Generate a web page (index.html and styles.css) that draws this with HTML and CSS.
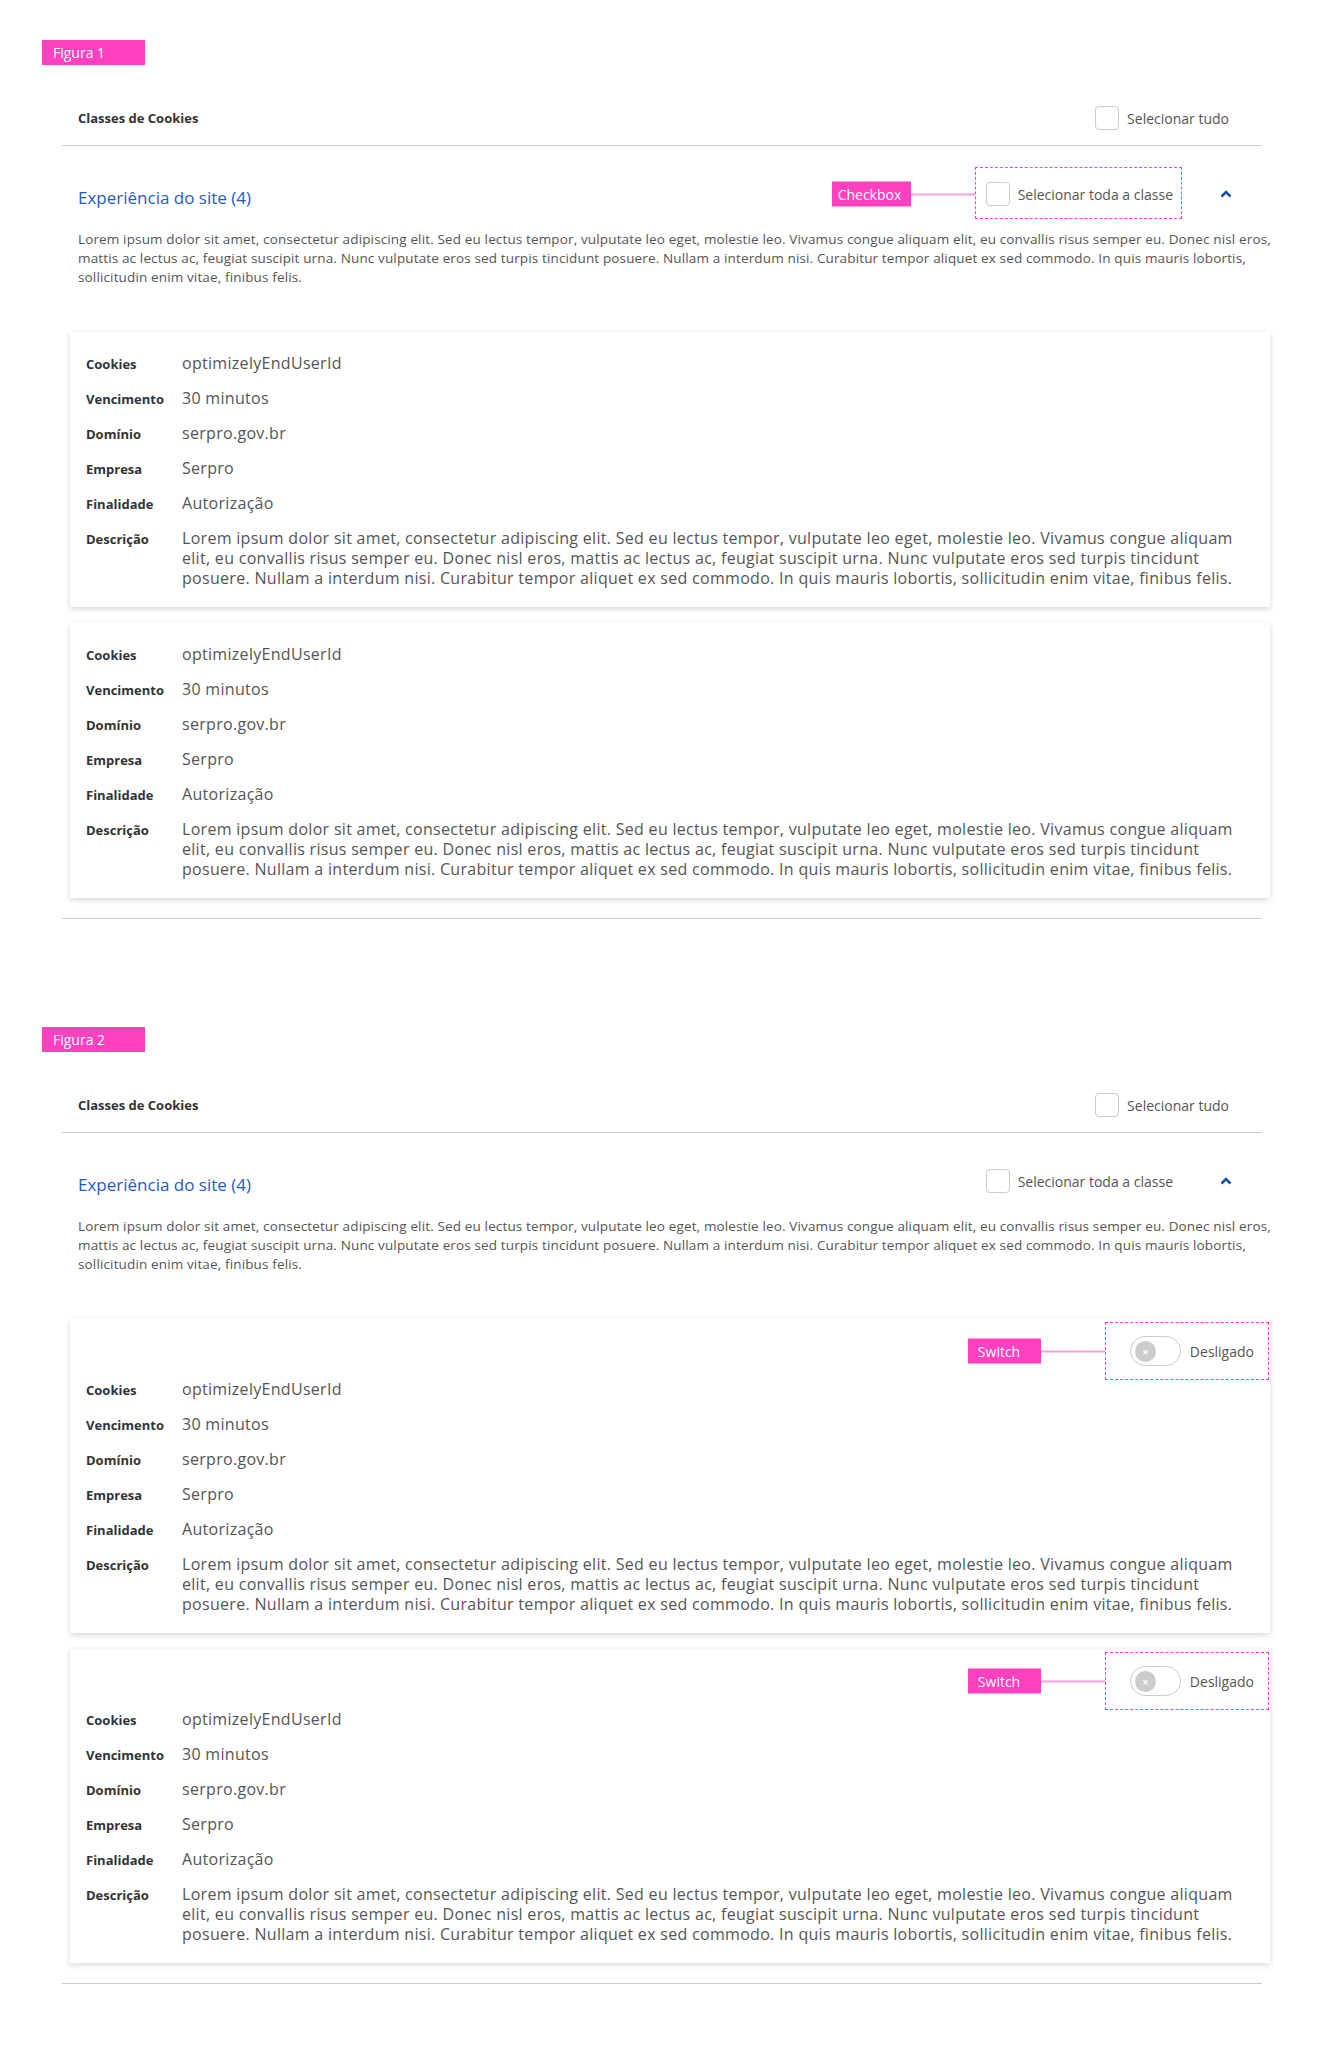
FILE: index.html
```html
<!DOCTYPE html>
<html lang="pt-BR">
<head>
<meta charset="utf-8">
<title>Classes de Cookies</title>
<link rel="stylesheet" href="styles.css">
</head>
<body>

<section class="figure">
  <div class="fig-tag">Figura 1</div>
  <div class="panel">
    <div class="panel-head">
      <span class="panel-title">Classes de Cookies</span>
      <label class="check"><span class="box"></span><span>Selecionar tudo</span></label>
    </div>
    <div class="class-item">
      <div class="class-head">
        <h2 class="class-title">Experiência do site (4)</h2>
        <div class="class-actions">
          <label class="check annotated annotated-check">
            <span class="box"></span><span>Selecionar toda a classe</span>
            <span class="note note-check">Checkbox</span>
          </label>
          <svg class="chevron" width="12" height="8" viewBox="0 0 12 8"><polyline points="1.5,6.5 6,2 10.5,6.5" fill="none" stroke="#1351b4" stroke-width="2.6"/></svg>
        </div>
      </div>
      <p class="class-desc">Lorem ipsum dolor sit amet, consectetur adipiscing elit. Sed eu lectus tempor, vulputate leo eget, molestie leo. Vivamus congue aliquam elit, eu convallis risus semper eu. Donec nisl eros, mattis ac lectus ac, feugiat suscipit urna. Nunc vulputate eros sed turpis tincidunt posuere. Nullam a interdum nisi. Curabitur tempor aliquet ex sed commodo. In quis mauris lobortis, sollicitudin enim vitae, finibus felis.</p>
      <div class="cards">
        <article class="card">
          <dl class="card-grid">
            <dt>Cookies</dt><dd>optimizelyEndUserId</dd>
            <dt>Vencimento</dt><dd>30 minutos</dd>
            <dt>Domínio</dt><dd>serpro.gov.br</dd>
            <dt>Empresa</dt><dd>Serpro</dd>
            <dt>Finalidade</dt><dd>Autorização</dd>
            <dt>Descrição</dt><dd>Lorem ipsum dolor sit amet, consectetur adipiscing elit. Sed eu lectus tempor, vulputate leo eget, molestie leo. Vivamus congue aliquam elit, eu convallis risus semper eu. Donec nisl eros, mattis ac lectus ac, feugiat suscipit urna. Nunc vulputate eros sed turpis tincidunt posuere. Nullam a interdum nisi. Curabitur tempor aliquet ex sed commodo. In quis mauris lobortis, sollicitudin enim vitae, finibus felis.</dd>
          </dl>
        </article>
        <article class="card">
          <dl class="card-grid">
            <dt>Cookies</dt><dd>optimizelyEndUserId</dd>
            <dt>Vencimento</dt><dd>30 minutos</dd>
            <dt>Domínio</dt><dd>serpro.gov.br</dd>
            <dt>Empresa</dt><dd>Serpro</dd>
            <dt>Finalidade</dt><dd>Autorização</dd>
            <dt>Descrição</dt><dd>Lorem ipsum dolor sit amet, consectetur adipiscing elit. Sed eu lectus tempor, vulputate leo eget, molestie leo. Vivamus congue aliquam elit, eu convallis risus semper eu. Donec nisl eros, mattis ac lectus ac, feugiat suscipit urna. Nunc vulputate eros sed turpis tincidunt posuere. Nullam a interdum nisi. Curabitur tempor aliquet ex sed commodo. In quis mauris lobortis, sollicitudin enim vitae, finibus felis.</dd>
          </dl>
        </article>
      </div>
    </div>
  </div>
</section>

<section class="figure">
  <div class="fig-tag">Figura 2</div>
  <div class="panel">
    <div class="panel-head">
      <span class="panel-title">Classes de Cookies</span>
      <label class="check"><span class="box"></span><span>Selecionar tudo</span></label>
    </div>
    <div class="class-item">
      <div class="class-head">
        <h2 class="class-title">Experiência do site (4)</h2>
        <div class="class-actions">
          <label class="check"><span class="box"></span><span>Selecionar toda a classe</span></label>
          <svg class="chevron" width="12" height="8" viewBox="0 0 12 8"><polyline points="1.5,6.5 6,2 10.5,6.5" fill="none" stroke="#1351b4" stroke-width="2.6"/></svg>
        </div>
      </div>
      <p class="class-desc">Lorem ipsum dolor sit amet, consectetur adipiscing elit. Sed eu lectus tempor, vulputate leo eget, molestie leo. Vivamus congue aliquam elit, eu convallis risus semper eu. Donec nisl eros, mattis ac lectus ac, feugiat suscipit urna. Nunc vulputate eros sed turpis tincidunt posuere. Nullam a interdum nisi. Curabitur tempor aliquet ex sed commodo. In quis mauris lobortis, sollicitudin enim vitae, finibus felis.</p>
      <div class="cards">
        <article class="card card-switch">
          <div class="switch-row">
            <label class="switch annotated annotated-switch">
              <span class="toggle"><span class="knob">×</span></span><span>Desligado</span>
              <span class="note note-switch">Switch</span>
            </label>
          </div>
          <dl class="card-grid">
            <dt>Cookies</dt><dd>optimizelyEndUserId</dd>
            <dt>Vencimento</dt><dd>30 minutos</dd>
            <dt>Domínio</dt><dd>serpro.gov.br</dd>
            <dt>Empresa</dt><dd>Serpro</dd>
            <dt>Finalidade</dt><dd>Autorização</dd>
            <dt>Descrição</dt><dd>Lorem ipsum dolor sit amet, consectetur adipiscing elit. Sed eu lectus tempor, vulputate leo eget, molestie leo. Vivamus congue aliquam elit, eu convallis risus semper eu. Donec nisl eros, mattis ac lectus ac, feugiat suscipit urna. Nunc vulputate eros sed turpis tincidunt posuere. Nullam a interdum nisi. Curabitur tempor aliquet ex sed commodo. In quis mauris lobortis, sollicitudin enim vitae, finibus felis.</dd>
          </dl>
        </article>
        <article class="card card-switch">
          <div class="switch-row">
            <label class="switch annotated annotated-switch">
              <span class="toggle"><span class="knob">×</span></span><span>Desligado</span>
              <span class="note note-switch">Switch</span>
            </label>
          </div>
          <dl class="card-grid">
            <dt>Cookies</dt><dd>optimizelyEndUserId</dd>
            <dt>Vencimento</dt><dd>30 minutos</dd>
            <dt>Domínio</dt><dd>serpro.gov.br</dd>
            <dt>Empresa</dt><dd>Serpro</dd>
            <dt>Finalidade</dt><dd>Autorização</dd>
            <dt>Descrição</dt><dd>Lorem ipsum dolor sit amet, consectetur adipiscing elit. Sed eu lectus tempor, vulputate leo eget, molestie leo. Vivamus congue aliquam elit, eu convallis risus semper eu. Donec nisl eros, mattis ac lectus ac, feugiat suscipit urna. Nunc vulputate eros sed turpis tincidunt posuere. Nullam a interdum nisi. Curabitur tempor aliquet ex sed commodo. In quis mauris lobortis, sollicitudin enim vitae, finibus felis.</dd>
          </dl>
        </article>
      </div>
    </div>
  </div>
</section>

</body>
</html>
```

FILE: styles.css
```css
* { box-sizing: border-box; }

body {
  margin: 0;
  background: #fff;
  font-family: "Open Sans", Lato, sans-serif;
  color: #555;
}

.figure { padding-top: 40px; }
.figure + .figure { padding-top: 108px; }

.fig-tag {
  margin-left: 42px;
  width: 103px;
  height: 25px;
  padding-left: 11px;
  background: #ff40bf;
  color: #fff;
  font-size: 14px;
  line-height: 25px;
}

.panel {
  margin-left: 62px;
  width: 1200px;
}

.panel-head {
  display: flex;
  justify-content: space-between;
  align-items: center;
  margin-top: 36px;
  height: 45px;
  padding: 0 33px 10px 16px;
  border-bottom: 1px solid #ccc;
}

.panel-title {
  font-size: 13px;
  font-weight: 700;
  color: #333;
}

.check {
  display: flex;
  align-items: center;
  gap: 8px;
  font-size: 14px;
  color: #555;
}

.box {
  width: 24px;
  height: 24px;
  border: 1px solid #ccc;
  border-radius: 4px;
  background: #fff;
}

.class-item {
  border-bottom: 1px solid #ccc;
  padding-bottom: 20px;
}

.class-head {
  display: flex;
  justify-content: space-between;
  align-items: center;
  padding: 36px 30px 0 16px;
}

.class-title {
  margin: 4px 0 -4px;
  font-size: 17px;
  font-weight: 400;
  color: #1f5bc4;
  line-height: 24px;
}

.class-actions {
  display: flex;
  align-items: center;
  gap: 47px;
}

.chevron { display: block; }

.class-desc {
  margin: 24px -20px 0 0;
  padding-left: 16px;
  font-size: 13.5px;
  letter-spacing: 0.14px;
  line-height: 19px;
  color: #555;
}

.cards {
  display: flex;
  flex-direction: column;
  gap: 16px;
  margin: 45px -8px 0 8px;
}

.card {
  background: #fff;
  box-shadow: 0 2px 6px rgba(0, 0, 0, 0.16);
  padding: 21px 16px 19px;
}

.card-switch { padding-top: 17px; }

.card-grid {
  display: grid;
  grid-template-columns: 96px 1fr;
  row-gap: 15px;
  align-items: start;
  margin: 0;
}

.card-grid dt {
  padding-top: 2px;
  font-size: 13px;
  font-weight: 700;
  color: #333;
  line-height: 18px;
}

.card-grid dd {
  margin: 0;
  font-size: 16px;
  letter-spacing: 0.3px;
  color: #555;
  line-height: 20px;
}

.switch-row {
  display: flex;
  justify-content: flex-end;
  height: 30px;
  margin-bottom: 13px;
}

.switch {
  display: flex;
  align-items: center;
  gap: 9px;
  font-size: 14px;
  color: #555;
}

.toggle {
  display: flex;
  align-items: center;
  width: 51px;
  height: 30px;
  padding-left: 4px;
  border: 1px solid #ccc;
  border-radius: 15px;
}

.knob {
  display: flex;
  align-items: center;
  justify-content: center;
  width: 21px;
  height: 21px;
  border-radius: 50%;
  background: #ccc;
  color: #fff;
  font-size: 11px;
  font-weight: 700;
}

/* design annotations */
.annotated { position: relative; }

.annotated::before {
  content: "";
  position: absolute;
  border: 1px dashed #ff40bf;
  pointer-events: none;
}

.annotated-check::before { inset: -15px -9px -13px -11px; }
.annotated-switch::before { inset: -14px -15px -14px -25px; }

.note {
  position: absolute;
  top: 50%;
  transform: translateY(-50%);
  height: 25px;
  background: #ff40bf;
  color: #fff;
  font-size: 14px;
  line-height: 25px;
  white-space: nowrap;
}

.note::after {
  content: "";
  position: absolute;
  left: 100%;
  top: 12px;
  width: 64px;
  height: 2px;
  background: #f9a0dc;
}

.note-check {
  right: calc(100% + 75px);
  width: 79px;
  padding-left: 6px;
}

.note-switch {
  right: calc(100% + 89px);
  width: 73px;
  padding-left: 10px;
}
```
